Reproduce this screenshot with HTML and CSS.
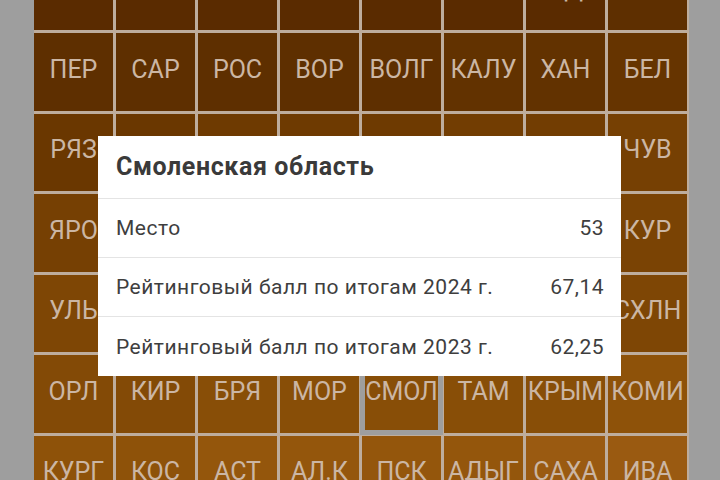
FILE: index.html
```html
<!DOCTYPE html>
<html lang="ru">
<head>
    <meta charset="UTF-8" />
    <meta name="viewport" content="width=device-width, initial-scale=1" />
    <title>Рейтинг регионов</title>
    <link rel="stylesheet" href="styles.css">
</head>
<body>
    <!-- Карта-сетка регионов -->
    <div class="map">
        <div class="tile l0"></div>
        <div class="tile l0"></div>
        <div class="tile l0"></div>
        <div class="tile l0"></div>
        <div class="tile l0"></div>
        <div class="tile l0"></div>
        <div class="tile l0">АД</div>
        <div class="tile l1"></div>

        <div class="tile l1">ПЕР</div>
        <div class="tile l1">САР</div>
        <div class="tile l1">РОС</div>
        <div class="tile l1">ВОР</div>
        <div class="tile l1">ВОЛГ</div>
        <div class="tile l2">КАЛУ</div>
        <div class="tile l2">ХАН</div>
        <div class="tile l3">БЕЛ</div>

        <!-- ряды под карточкой: подписи скрыты ею -->
        <div class="tile l4">РЯЗ</div>
        <div class="tile l4"></div>
        <div class="tile l5"></div>
        <div class="tile l5"></div>
        <div class="tile l5"></div>
        <div class="tile l6"></div>
        <div class="tile l6"></div>
        <div class="tile l7">ЧУВ</div>

        <div class="tile l7">ЯРО</div>
        <div class="tile l7"></div>
        <div class="tile l7"></div>
        <div class="tile l8"></div>
        <div class="tile l8"></div>
        <div class="tile l8"></div>
        <div class="tile l8"></div>
        <div class="tile l8">КУР</div>

        <div class="tile l9">УЛЬ</div>
        <div class="tile l9"></div>
        <div class="tile l9"></div>
        <div class="tile l9"></div>
        <div class="tile l9"></div>
        <div class="tile l9"></div>
        <div class="tile l9"></div>
        <div class="tile l9">СХЛН</div>

        <div class="tile l10">ОРЛ</div>
        <div class="tile l10">КИР</div>
        <div class="tile l11">БРЯ</div>
        <div class="tile l11">МОР</div>
        <div class="tile l11 selected">СМОЛ</div>
        <div class="tile l11">ТАМ</div>
        <div class="tile l11">КРЫМ</div>
        <div class="tile l12">КОМИ</div>

        <div class="tile l12">КУРГ</div>
        <div class="tile l12">КОС</div>
        <div class="tile l13">АСТ</div>
        <div class="tile l13">АЛ.К</div>
        <div class="tile l13">ПСК</div>
        <div class="tile l13">АДЫГ</div>
        <div class="tile l14">САХА</div>
        <div class="tile l14">ИВА</div>
    </div>

    <!-- Всплывающая карточка региона -->
    <div class="popup">
        <div class="popup-title">Смоленская область</div>
        <div class="popup-row">
            <span>Место</span>
            <span>53</span>
        </div>
        <div class="popup-row">
            <span>Рейтинговый балл по итогам 2024 г.</span>
            <span>67,14</span>
        </div>
        <div class="popup-row">
            <span>Рейтинговый балл по итогам 2023 г.</span>
            <span>62,25</span>
        </div>
    </div>
</body>
</html>
```

FILE: styles.css
```css
html, body {
    margin: 0;
    height: 100%;
}
body {
    background-color: #9e9e9e;
    font-family: Roboto, "Noto Sans", sans-serif;
    overflow: hidden;
    position: relative;
}
.map {
    display: grid;
    grid-template-columns: repeat(8, 79px);
    grid-auto-rows: 77.5px;
    gap: 3px;
    width: 653px;
    margin: -47.5px 0 0 34px;
    padding-right: 2px;
    background-color: #bead9d;
}
.tile {
    display: flex;
    align-items: center;
    justify-content: center;
    padding-bottom: 5px;
    box-sizing: border-box;
    color: #cbb6a4;
    font-size: 25px;
    white-space: nowrap;
}
.tile.selected {
    outline: 5px solid #9e9e9e;
    outline-offset: -3px;
}
.l0 { background-color: #5a2b00; }
.l1 { background-color: #5e2f00; }
.l2 { background-color: #623200; }
.l3 { background-color: #663400; }
.l4 { background-color: #6a3700; }
.l5 { background-color: #6e3a01; }
.l6 { background-color: #723d02; }
.l7 { background-color: #764003; }
.l8 { background-color: #7a4304; }
.l9 { background-color: #7e4605; }
.l10 { background-color: #834a06; }
.l11 { background-color: #884e07; }
.l12 { background-color: #8e5209; }
.l13 { background-color: #94560c; }
.l14 { background-color: #9a5a11; }

.popup {
    position: absolute;
    left: 98px;
    top: 136px;
    width: 523px;
    background-color: #fff;
    color: #3e3e3e;
}
.popup-title {
    height: 63px;
    box-sizing: border-box;
    padding: 0 18px 2px;
    display: flex;
    align-items: center;
    font-size: 25px;
    font-weight: bold;
    letter-spacing: 0.6px;
    color: #3a3a3a;
    border-bottom: 1px solid #e4e4e4;
}
.popup-row {
    height: 59px;
    box-sizing: border-box;
    padding: 0 17px 0 18px;
    display: flex;
    align-items: center;
    justify-content: space-between;
    font-size: 21px;
    letter-spacing: 0.5px;
    border-bottom: 1px solid #e4e4e4;
}
.popup-row:last-child {
    border-bottom: none;
}
```
